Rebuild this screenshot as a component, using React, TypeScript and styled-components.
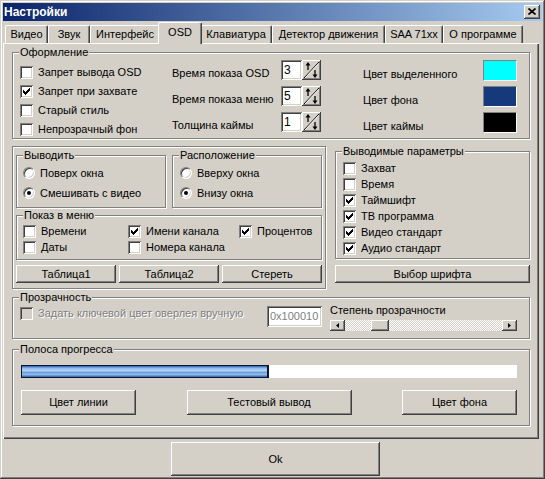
import React from "react";
import styled, { createGlobalStyle, css } from "styled-components";

const Global = createGlobalStyle`
  html, body { margin: 0; padding: 0; background: #d4d0c8; }
  body {
    font-family: "Liberation Sans", Arial, sans-serif;
    font-size: 11px;
    line-height: 13px;
    color: #000;
  }
  * { box-sizing: border-box; }
`;

const raised = css`
  box-shadow: inset -1px -1px #404040, inset 1px 1px #ffffff, inset -2px -2px #808080;
`;

const sunken = css`
  box-shadow: inset 1px 1px #808080, inset -1px -1px #ffffff, inset 2px 2px #404040,
    inset -2px -2px #d4d0c8;
`;

const Window = styled.div`
  width: 545px;
  height: 479px;
  padding: 3px;
  background: #d4d0c8;
  box-shadow: inset -1px -1px #404040, inset 1px 1px #d4d0c8, inset -2px -2px #808080,
    inset 2px 2px #ffffff;
  display: flex;
  flex-direction: column;
`;

const TitleBar = styled.div`
  height: 18px;
  flex: none;
  display: flex;
  align-items: center;
  justify-content: space-between;
  padding: 0 2px 0 1px;
  background: linear-gradient(to right, #0a246a, #a6caf0);
`;

const TitleText = styled.span`
  color: #fff;
  font-weight: bold;
  font-size: 12px;
`;

const CloseBtn = styled.div`
  width: 16px;
  height: 14px;
  background: #d4d0c8;
  ${raised};
  display: flex;
  align-items: center;
  justify-content: center;
  padding-bottom: 1px;
`;

const TabRow = styled.div`
  height: 22px;
  flex: none;
  display: flex;
  align-items: flex-end;
  padding-left: 2px;
`;

const Tab = styled.div<{ $w: number; $active?: boolean }>`
  position: relative;
  width: ${(p) => (p.$active ? p.$w + 4 : p.$w)}px;
  height: ${(p) => (p.$active ? 22 : 18)}px;
  margin: ${(p) => (p.$active ? "0 -2px -1px" : "0")};
  z-index: ${(p) => (p.$active ? 2 : 1)};
  background: #d4d0c8;
  border-top: 1px solid #ffffff;
  border-left: 1px solid #ffffff;
  border-right: 1px solid #404040;
  border-radius: 2px 2px 0 0;
  box-shadow: inset -1px 0 #808080;
  display: flex;
  align-items: center;
  justify-content: center;
  padding-bottom: ${(p) => (p.$active ? 2 : 0)}px;
  white-space: nowrap;
`;

const TabPanel = styled.div`
  width: 536px;
  height: 396px;
  flex: none;
  padding: 9px 9px 0 9px;
  background: #d4d0c8;
  box-shadow: inset 1px 1px #ffffff, inset -1px -1px #404040, inset -2px -2px #808080;
  display: flex;
  flex-direction: column;
`;

const Group = styled.div<{ $mt?: number; $pad: string }>`
  position: relative;
  margin-top: ${(p) => p.$mt ?? 0}px;
  padding: ${(p) => p.$pad};
  border: 1px solid #808080;
  box-shadow: inset 1px 1px #ffffff, 1px 1px #ffffff;
`;

const Caption = styled.span`
  position: absolute;
  top: -7px;
  left: 6px;
  padding: 0 1px;
  background: #d4d0c8;
  line-height: 13px;
  white-space: nowrap;
`;

const DesignGrid = styled.div`
  display: grid;
  grid-template-columns: 152px 191px 1fr;
  align-items: start;
`;

const OptList = styled.div<{ $row: number; $gap?: number; $pt?: number }>`
  display: grid;
  grid-auto-rows: ${(p) => p.$row}px;
  row-gap: ${(p) => p.$gap ?? 0}px;
  padding-top: ${(p) => p.$pt ?? 0}px;
  align-items: center;
`;

const FieldCol = styled.div<{ $gap: number }>`
  display: flex;
  flex-direction: column;
  gap: ${(p) => p.$gap}px;
`;

const SpinRow = styled.div`
  display: flex;
  align-items: flex-end;
  height: 20px;
`;

const FieldLabel = styled.span<{ $w?: number }>`
  width: ${(p) => (p.$w ? `${p.$w}px` : "auto")};
  line-height: 13px;
  white-space: nowrap;
`;

const Spin = styled.div`
  display: flex;
  height: 20px;
`;

const SpinEdit = styled.div`
  width: 21px;
  background: #fff;
  ${sunken};
  padding-left: 3px;
  display: flex;
  align-items: center;
  font-size: 12px;
`;

const SpinBtn = styled.div`
  width: 19px;
  background: #d4d0c8;
  ${raised};
  display: flex;
`;

const ColorRow = styled.div`
  display: flex;
  align-items: flex-end;
  justify-content: space-between;
  height: 21px;
`;

const Swatch = styled.div<{ $c: string }>`
  width: 34px;
  height: 21px;
  background: ${(p) => p.$c};
  border: 1px solid;
  border-color: #808080 #ffffff #ffffff #808080;
`;

const CheckLabel = styled.label<{ $disabled?: boolean }>`
  display: flex;
  align-items: center;
  gap: 5px;
  white-space: nowrap;
  color: ${(p) => (p.$disabled ? "#808080" : "#000")};
  text-shadow: ${(p) => (p.$disabled ? "1px 1px 0 #ffffff" : "none")};
`;

const CheckBox = styled.span<{ $disabled?: boolean }>`
  width: 13px;
  height: 13px;
  flex: none;
  display: flex;
  align-items: center;
  justify-content: center;
  background: ${(p) => (p.$disabled ? "#d4d0c8" : "#ffffff")};
  ${sunken};
`;

const RadioCircle = styled.span<{ $on?: boolean }>`
  width: 12px;
  height: 12px;
  flex: none;
  border-radius: 50%;
  background: #fff;
  border: 1px solid;
  border-color: #808080 #ffffff #ffffff #808080;
  box-shadow: inset 1px 1px #404040, inset -1px -1px #d4d0c8;
  display: flex;
  align-items: center;
  justify-content: center;
  &::after {
    content: "";
    width: 4px;
    height: 4px;
    border-radius: 50%;
    background: #000;
    display: ${(p) => (p.$on ? "block" : "none")};
  }
`;

const MiddleRow = styled.div`
  display: flex;
  gap: 9px;
  margin-top: 7px;
  align-items: flex-start;
`;

const LeftBox = styled.div`
  width: 314px;
  padding: 8px 3px 5px 3px;
  border: 1px solid #808080;
  box-shadow: inset 1px 1px #ffffff, 1px 1px #ffffff;
  display: flex;
  flex-direction: column;
`;

const Pair = styled.div`
  display: grid;
  grid-template-columns: 150px 150px;
  column-gap: 6px;
`;

const MenuGrid = styled.div`
  display: grid;
  grid-template-columns: 105px 111px 1fr;
  grid-auto-rows: 16px;
  align-items: center;
`;

const ButtonRow3 = styled.div`
  display: grid;
  grid-template-columns: repeat(3, 1fr);
  column-gap: 3px;
  margin-top: 5px;
`;

const RightCol = styled.div`
  width: 195px;
  padding-top: 5px;
  display: flex;
  flex-direction: column;
`;

const Button = styled.button<{ $h: number; $w?: number; $mt?: number }>`
  font: inherit;
  color: #000;
  background: #d4d0c8;
  border: 0;
  padding: 0;
  margin: ${(p) => p.$mt ?? 0}px 0 0 0;
  height: ${(p) => p.$h}px;
  width: ${(p) => (p.$w ? `${p.$w}px` : "auto")};
  ${raised};
  white-space: nowrap;
`;

const OkButton = styled(Button)`
  margin-left: 168px;
  align-self: flex-start;
`;

const TransGrid = styled.div`
  display: grid;
  grid-template-columns: 247px 63px 1fr;
  align-items: start;
`;

const TransCheck = styled.div`
  margin-top: 1px;
  height: 17px;
  display: flex;
  align-items: center;
`;

const HexEdit = styled.div`
  width: 55px;
  height: 21px;
  margin-top: 2px;
  background: #fff;
  ${sunken};
  padding-left: 3px;
  display: flex;
  align-items: center;
  color: #808080;
`;

const ScrollBar = styled.div`
  display: flex;
  height: 11px;
  margin-top: 3px;
`;

const ScrollArrow = styled.div`
  width: 15px;
  flex: none;
  background: #d4d0c8;
  ${raised};
  display: flex;
  align-items: center;
  justify-content: center;
`;

const ScrollTrack = styled.div`
  flex: 1;
  position: relative;
  background: repeating-conic-gradient(#ffffff 0% 25%, #d4d0c8 0% 50%) 0 0 / 2px 2px;
`;

const ScrollThumb = styled.div`
  position: absolute;
  top: 0;
  bottom: 0;
  width: 18px;
  background: #d4d0c8;
  ${raised};
`;

const Progress = styled.div`
  height: 13px;
  background: #ffffff;
  display: flex;
`;

const ProgressFill = styled.div`
  height: 100%;
  border: 1px solid #0b1530;
  border-right-width: 2px;
  background: linear-gradient(
    to bottom,
    #2d5ea6 0%,
    #8fbcee 20%,
    #b4d4f6 42%,
    #6f9fdc 58%,
    #8fbcee 78%,
    #2d5ea6 100%
  );
`;

const ProgressButtons = styled.div`
  display: flex;
  justify-content: space-between;
  margin-top: 12px;
`;

const CheckMark = () => (
  <svg width="7" height="7" viewBox="0 0 7 7" shapeRendering="crispEdges">
    <path
      d="M6 0h1v1h-1z M5 1h2v1h-2z M0 2h1v1H0z M4 2h3v1h-3z M0 3h2v1H0z M3 3h3v1h-3z M0 4h5v1H0z M1 5h3v1H1z M2 6h1v1H2z"
      fill="#000"
    />
  </svg>
);

const Check = ({
  label,
  checked,
  disabled,
}: {
  label: string;
  checked?: boolean;
  disabled?: boolean;
}) => (
  <CheckLabel $disabled={disabled}>
    <CheckBox $disabled={disabled}>{checked && <CheckMark />}</CheckBox>
    <span>{label}</span>
  </CheckLabel>
);

const Radio = ({ label, on }: { label: string; on?: boolean }) => (
  <CheckLabel>
    <RadioCircle $on={on} />
    <span>{label}</span>
  </CheckLabel>
);

const SpinIcon = () => (
  <svg width="19" height="20" viewBox="0 0 19 20">
    <line x1="2" y1="18" x2="17" y2="2" stroke="#000" strokeWidth="1" />
    <line x1="3" y1="18" x2="17" y2="3" stroke="#fff" strokeWidth="0.8" />
    <line x1="6" y1="4" x2="6" y2="10" stroke="#000" strokeWidth="1.3" />
    <polygon points="6,2 3.5,5.5 8.5,5.5" fill="#000" />
    <line x1="13" y1="10" x2="13" y2="16" stroke="#000" strokeWidth="1.3" />
    <polygon points="13,18 10.5,14.5 15.5,14.5" fill="#000" />
  </svg>
);

const SpinField = ({ value }: { value: string }) => (
  <Spin>
    <SpinEdit>{value}</SpinEdit>
    <SpinBtn>
      <SpinIcon />
    </SpinBtn>
  </Spin>
);

const tabs = [
  { label: "Видео", w: 43 },
  { label: "Звук", w: 42 },
  { label: "Интерфейс", w: 70 },
  { label: "OSD", w: 40, active: true },
  { label: "Клавиатура", w: 72 },
  { label: "Детектор движения", w: 113 },
  { label: "SAA 71xx", w: 58 },
  { label: "О программе", w: 80 },
];

const spins = [
  { label: "Время показа OSD", value: "3" },
  { label: "Время показа меню", value: "5" },
  { label: "Толщина каймы", value: "1" },
];

const colors = [
  { label: "Цвет выделенного", c: "#00ffff" },
  { label: "Цвет фона", c: "#15397a" },
  { label: "Цвет каймы", c: "#000000" },
];

const params = [
  { label: "Захват", checked: false },
  { label: "Время", checked: false },
  { label: "Таймшифт", checked: true },
  { label: "ТВ программа", checked: true },
  { label: "Видео стандарт", checked: true },
  { label: "Аудио стандарт", checked: true },
];

const TRACK_W = 156;
const THUMB_W = 18;
const transparency = 19;
const progress = 50;

export default function App() {
  const thumbLeft = Math.round((transparency / 100) * (TRACK_W - THUMB_W));
  return (
    <>
      <Global />
      <Window>
        <TitleBar>
          <TitleText>Настройки</TitleText>
          <CloseBtn>
            <svg width="8" height="7" viewBox="0 0 8 7">
              <path d="M0.5 0.5 L7.5 6.5 M7.5 0.5 L0.5 6.5" stroke="#000" strokeWidth="1.7" />
            </svg>
          </CloseBtn>
        </TitleBar>

        <TabRow>
          {tabs.map((t) => (
            <Tab key={t.label} $w={t.w} $active={t.active}>
              {t.label}
            </Tab>
          ))}
        </TabRow>

        <TabPanel>
          <Group $pad="7px 12px 2px 7px">
            <Caption>Оформление</Caption>
            <DesignGrid>
              <OptList $row={13} $gap={6} $pt={6}>
                <Check label="Запрет вывода OSD" />
                <Check label="Запрет при захвате" checked />
                <Check label="Старый стиль" />
                <Check label="Непрозрачный фон" />
              </OptList>
              <FieldCol $gap={6}>
                {spins.map((s) => (
                  <SpinRow key={s.label}>
                    <FieldLabel $w={109}>{s.label}</FieldLabel>
                    <SpinField value={s.value} />
                  </SpinRow>
                ))}
              </FieldCol>
              <FieldCol $gap={5}>
                {colors.map((c) => (
                  <ColorRow key={c.label}>
                    <FieldLabel>{c.label}</FieldLabel>
                    <Swatch $c={c.c} />
                  </ColorRow>
                ))}
              </FieldCol>
            </DesignGrid>
          </Group>

          <MiddleRow>
            <LeftBox>
              <Pair>
                <Group $pad="7px 0 4px 6px">
                  <Caption>Выводить</Caption>
                  <OptList $row={20}>
                    <Radio label="Поверх окна" />
                    <Radio label="Смешивать с видео" on />
                  </OptList>
                </Group>
                <Group $pad="7px 0 4px 7px">
                  <Caption>Расположение</Caption>
                  <OptList $row={20}>
                    <Radio label="Вверху окна" />
                    <Radio label="Внизу окна" on />
                  </OptList>
                </Group>
              </Pair>
              <Group $mt={7} $pad="7px 0 4px 6px">
                <Caption>Показ в меню</Caption>
                <MenuGrid>
                  <Check label="Времени" />
                  <Check label="Имени канала" checked />
                  <Check label="Процентов" checked />
                  <Check label="Даты" />
                  <Check label="Номера канала" />
                </MenuGrid>
              </Group>
              <ButtonRow3>
                <Button $h={18}>Таблица1</Button>
                <Button $h={18}>Таблица2</Button>
                <Button $h={18}>Стереть</Button>
              </ButtonRow3>
            </LeftBox>

            <RightCol>
              <Group $pad="8px 0 2px 7px">
                <Caption>Выводимые параметры</Caption>
                <OptList $row={16}>
                  {params.map((p) => (
                    <Check key={p.label} label={p.label} checked={p.checked} />
                  ))}
                </OptList>
              </Group>
              <Button $h={18} $mt={6}>
                Выбор шрифта
              </Button>
            </RightCol>
          </MiddleRow>

          <Group $mt={8} $pad="6px 12px 7px 7px">
            <Caption>Прозрачность</Caption>
            <TransGrid>
              <TransCheck>
                <Check label="Задать ключевой цвет оверлея вручную" disabled />
              </TransCheck>
              <HexEdit>0x100010</HexEdit>
              <FieldCol $gap={0}>
                <FieldLabel>Степень прозрачности</FieldLabel>
                <ScrollBar>
                  <ScrollArrow>
                    <svg width="3" height="5" viewBox="0 0 3 5">
                      <polygon points="0,2.5 3,0 3,5" fill="#000" />
                    </svg>
                  </ScrollArrow>
                  <ScrollTrack>
                    <ScrollThumb style={{ left: thumbLeft }} />
                  </ScrollTrack>
                  <ScrollArrow>
                    <svg width="3" height="5" viewBox="0 0 3 5">
                      <polygon points="3,2.5 0,0 0,5" fill="#000" />
                    </svg>
                  </ScrollArrow>
                </ScrollBar>
              </FieldCol>
            </TransGrid>
          </Group>

          <Group $mt={10} $pad="15px 12px 10px 8px">
            <Caption>Полоса прогресса</Caption>
            <Progress>
              <ProgressFill style={{ width: `${progress}%` }} />
            </Progress>
            <ProgressButtons>
              <Button $h={25} $w={115}>
                Цвет линии
              </Button>
              <Button $h={25} $w={165}>
                Тестовый вывод
              </Button>
              <Button $h={25} $w={115}>
                Цвет фона
              </Button>
            </ProgressButtons>
          </Group>
        </TabPanel>

        <OkButton $h={34} $w={209} $mt={3}>
          Ok
        </OkButton>
      </Window>
    </>
  );
}
